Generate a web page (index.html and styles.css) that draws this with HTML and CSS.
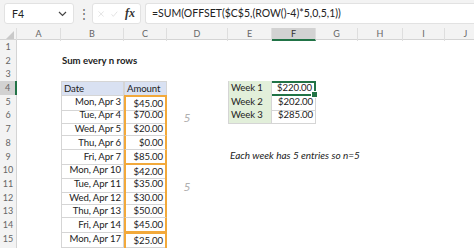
FILE: index.html
```html
<!DOCTYPE html>
<html lang="en">
<head>
    <meta charset="UTF-8">
    <title>Sum every n rows</title>
    <link rel="stylesheet" href="styles.css">
</head>
<body>

    <div class="formula-bar">
        <div class="name-box">
            <span>F4</span>
            <svg width="9" height="6" viewBox="0 0 9 6"><path d="M1 1 L4.5 4.5 L8 1" fill="none" stroke="#444" stroke-width="1.2"/></svg>
        </div>
        <div class="dots">&#8942;</div>
        <div class="fx-box">
            <svg width="12" height="12" viewBox="0 0 12 12"><path d="M1 1 L11 11 M11 1 L1 11" stroke="#cfcfcf" stroke-width="1.1"/></svg>
            <svg width="13" height="12" viewBox="0 0 13 12"><path d="M1 6.5 L4.5 10.5 L12 1.5" fill="none" stroke="#cfcfcf" stroke-width="1.1"/></svg>
            <span class="fx">fx</span>
        </div>
        <div class="formula">=SUM(OFFSET($C$5,(ROW()-4)*5,0,5,1))</div>
    </div>

    <div class="sheet">
        <div class="row head">
            <div class="corner"><svg width="8" height="8" viewBox="0 0 8 8"><path d="M8 0 L8 8 L0 8 Z" fill="#c9c9c9"/></svg></div>
            <div>A</div><div>B</div><div>C</div><div>D</div><div>E</div>
            <div class="sel">F</div><div>G</div><div>H</div><div>I</div><div>J</div>
        </div>

        <div class="row"><div class="rh">1</div></div>
        <div class="row"><div class="rh">2</div><div></div><div class="title">Sum every n rows</div></div>
        <div class="row"><div class="rh">3</div></div>

        <div class="row">
            <div class="rh on">4</div><div></div>
            <div class="cell th">Date</div><div class="cell th">Amount</div><div></div>
            <div class="cell wk">Week 1</div><div class="cell num active">$220.00</div>
        </div>
        <div class="row">
            <div class="rh">5</div><div></div>
            <div class="cell num">Mon, Apr 3</div><div class="cell num amt top">$45.00</div><div></div>
            <div class="cell wk">Week 2</div><div class="cell num">$202.00</div>
        </div>
        <div class="row">
            <div class="rh">6</div><div></div>
            <div class="cell num">Tue, Apr 4</div><div class="cell num amt">$70.00</div><div class="mark">5</div>
            <div class="cell wk">Week 3</div><div class="cell num">$285.00</div>
        </div>
        <div class="row">
            <div class="rh">7</div><div></div>
            <div class="cell num">Wed, Apr 5</div><div class="cell num amt">$20.00</div>
        </div>
        <div class="row">
            <div class="rh">8</div><div></div>
            <div class="cell num">Thu, Apr 6</div><div class="cell num amt">$0.00</div>
        </div>
        <div class="row">
            <div class="rh">9</div><div></div>
            <div class="cell num">Fri, Apr 7</div><div class="cell num amt bottom">$85.00</div>
        </div>
        <div class="row">
            <div class="rh">10</div><div></div>
            <div class="cell num">Mon, Apr 10</div><div class="cell num amt top">$42.00</div><div></div>
            <div class="note">Each week has 5 entries so n=5</div>
        </div>
        <div class="row">
            <div class="rh">11</div><div></div>
            <div class="cell num">Tue, Apr 11</div><div class="cell num amt">$35.00</div><div class="mark">5</div>
        </div>
        <div class="row">
            <div class="rh">12</div><div></div>
            <div class="cell num">Wed, Apr 12</div><div class="cell num amt">$30.00</div>
        </div>
        <div class="row">
            <div class="rh">13</div><div></div>
            <div class="cell num">Thu, Apr 13</div><div class="cell num amt">$50.00</div>
        </div>
        <div class="row">
            <div class="rh">14</div><div></div>
            <div class="cell num">Fri, Apr 14</div><div class="cell num amt bottom">$45.00</div>
        </div>
        <div class="row">
            <div class="rh">15</div><div></div>
            <div class="cell num">Mon, Apr 17</div><div class="cell num amt top">$25.00</div>
        </div>
        <div class="row">
            <div class="rh"></div><div></div>
            <div class="cell num"></div><div class="cell num amt"></div>
        </div>
    </div>

</body>
</html>
```

FILE: styles.css
```css
* {
    margin: 0;
    padding: 0;
    box-sizing: border-box;
}

body {
    font-family: 'Lato', 'Open Sans', sans-serif;
    background: #ffffff;
    color: #222;
    width: 474px;
    height: 248px;
    overflow: hidden;
}

/* formula bar */
.formula-bar {
    display: flex;
    align-items: center;
    gap: 4px;
    height: 28px;
    padding: 3px 0 4px 4px;
    background: #f3f3f3;
}

.name-box {
    display: flex;
    align-items: center;
    justify-content: space-between;
    width: 70px;
    height: 21px;
    padding: 0 6px 0 7px;
    background: #fff;
    border: 1px solid #e2e2e2;
    border-radius: 3px;
    font-size: 10.5px;
}

.dots {
    width: 10px;
    text-align: center;
    color: #666;
    font-size: 12px;
}

.fx-box {
    display: flex;
    align-items: center;
    gap: 7px;
    width: 49px;
    height: 21px;
    padding: 0 5px;
    background: #fff;
    border: 1px solid #e2e2e2;
    border-radius: 3px;
}

.fx {
    font-family: 'Liberation Serif', serif;
    font-style: italic;
    font-weight: bold;
    font-size: 12px;
    color: #333;
}

.formula {
    flex: 1;
    height: 21px;
    line-height: 19px;
    padding-left: 6px;
    background: #fff;
    border: 1px solid #e2e2e2;
    border-right: none;
    border-radius: 3px 0 0 3px;
    font-size: 10.5px;
    white-space: nowrap;
}

/* grid */
.sheet {
    display: flex;
    flex-direction: column;
}

.row {
    display: grid;
    grid-template-columns: 17px 44px 63px 43px 61px 44px 44px 42px 45px 42px 42px;
    height: 13.7px;
    font-size: 9.6px;
    line-height: 13px;
}

.row.head {
    height: 12px;
    background: #f3f3f3;
    border-bottom: 1px solid #d4d4d4;
    font-size: 9px;
    line-height: 11px;
    color: #666;
}

.row.head div {
    text-align: center;
    border-right: 1px solid #dedede;
}

.row.head .corner {
    display: flex;
    align-items: flex-end;
    justify-content: flex-end;
    padding: 0 2px 2px 0;
}

.row.head .sel {
    background: #d2d2d2;
    border-bottom: 2px solid #217346;
    color: #333;
}

.rh {
    background: #f3f3f3;
    border-right: 1px solid #d4d4d4;
    text-align: center;
    font-size: 9px;
    color: #666;
}

.rh.on {
    background: #d2d2d2;
    border-right: 2px solid #217346;
}

.title {
    grid-column: span 2;
    font-weight: bold;
    padding-left: 1px;
    white-space: nowrap;
}

.cell {
    border: 1px solid #d5d5d5;
    border-top: none;
    padding: 0 2px;
    white-space: nowrap;
    letter-spacing: -0.1px;
}

.th {
    background: #d9e1f2;
    border-top: 1px solid #d5d5d5;
}

.num {
    text-align: right;
}

.wk {
    background: #e2efda;
}

.row .wk + .num {
    border-left: none;
}

.active {
    position: relative;
    border: 2px solid #217346;
    line-height: 10px;
}

.active::after {
    content: '';
    position: absolute;
    right: -4px;
    bottom: -4px;
    width: 5px;
    height: 5px;
    background: #217346;
    border: 1px solid #fff;
}

.amt {
    border-left: 2px solid #f2a93b;
    border-right: 2px solid #f2a93b;
}

.amt.top {
    border-top: 2px solid #f2a93b;
}

.amt.bottom {
    border-bottom: 2px solid #f2a93b;
}

.mark {
    padding: 6px 0 0 17px;
    font-family: 'DejaVu Sans', sans-serif;
    font-style: italic;
    font-size: 10px;
    line-height: 10px;
    color: #b0b0b0;
}

.note {
    grid-column: span 5;
    padding-left: 2px;
    font-style: italic;
    font-size: 10px;
    white-space: nowrap;
    margin-top: -14px;
}
```
